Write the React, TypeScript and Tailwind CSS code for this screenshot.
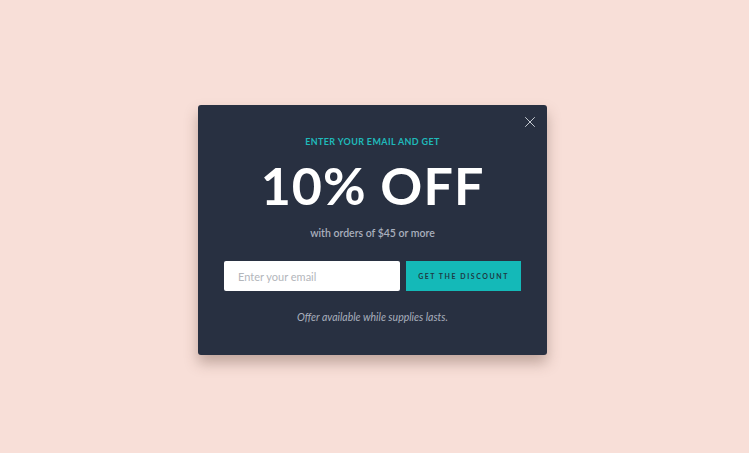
import { X } from "lucide-react";

export default function App() {
  return (
    <div className="flex h-[453px] w-[749px] justify-center bg-[#f8dfd8] pt-[105px] pr-[4px] font-['Lato',sans-serif]">
      <div className="relative flex h-[250px] w-[349px] flex-col items-center rounded-[3px] bg-[#283041] shadow-[0_8px_14px_rgba(90,60,50,0.35)]">
        <button className="absolute right-[8px] top-[8px] text-[#d7dbe2]">
          <X size={18} strokeWidth={1.2} />
        </button>
        <p className="mt-[31px] text-[9px] font-bold leading-[12px] tracking-[0.04em] text-[#1fb9ba]">
          ENTER YOUR EMAIL AND GET
        </p>
        <h1 className="mt-[11px] text-[52px] font-bold leading-[52px] tracking-[0.02em] text-white">
          10% OFF
        </h1>
        <p className="mt-[15px] text-[10.5px] font-semibold leading-[14px] text-[#a8afbd]">
          with orders of $45 or more
        </p>
        <div className="mt-[21px] flex gap-[6px]">
          <input
            className="h-[30px] w-[176px] rounded-[2px] bg-white px-[14px] text-[11px] text-[#333] placeholder:text-[#b3b6bb] outline-none"
            placeholder="Enter your email"
          />
          <button className="h-[30px] w-[115px] bg-[#14b9b8] text-[7px] font-bold tracking-[0.22em] text-[#1e3a44]">
            GET THE DISCOUNT
          </button>
        </div>
        <p className="mt-[19px] text-[10.5px] italic leading-[14px] text-[#a8afbd]">
          Offer available while supplies lasts.
        </p>
      </div>
    </div>
  );
}
